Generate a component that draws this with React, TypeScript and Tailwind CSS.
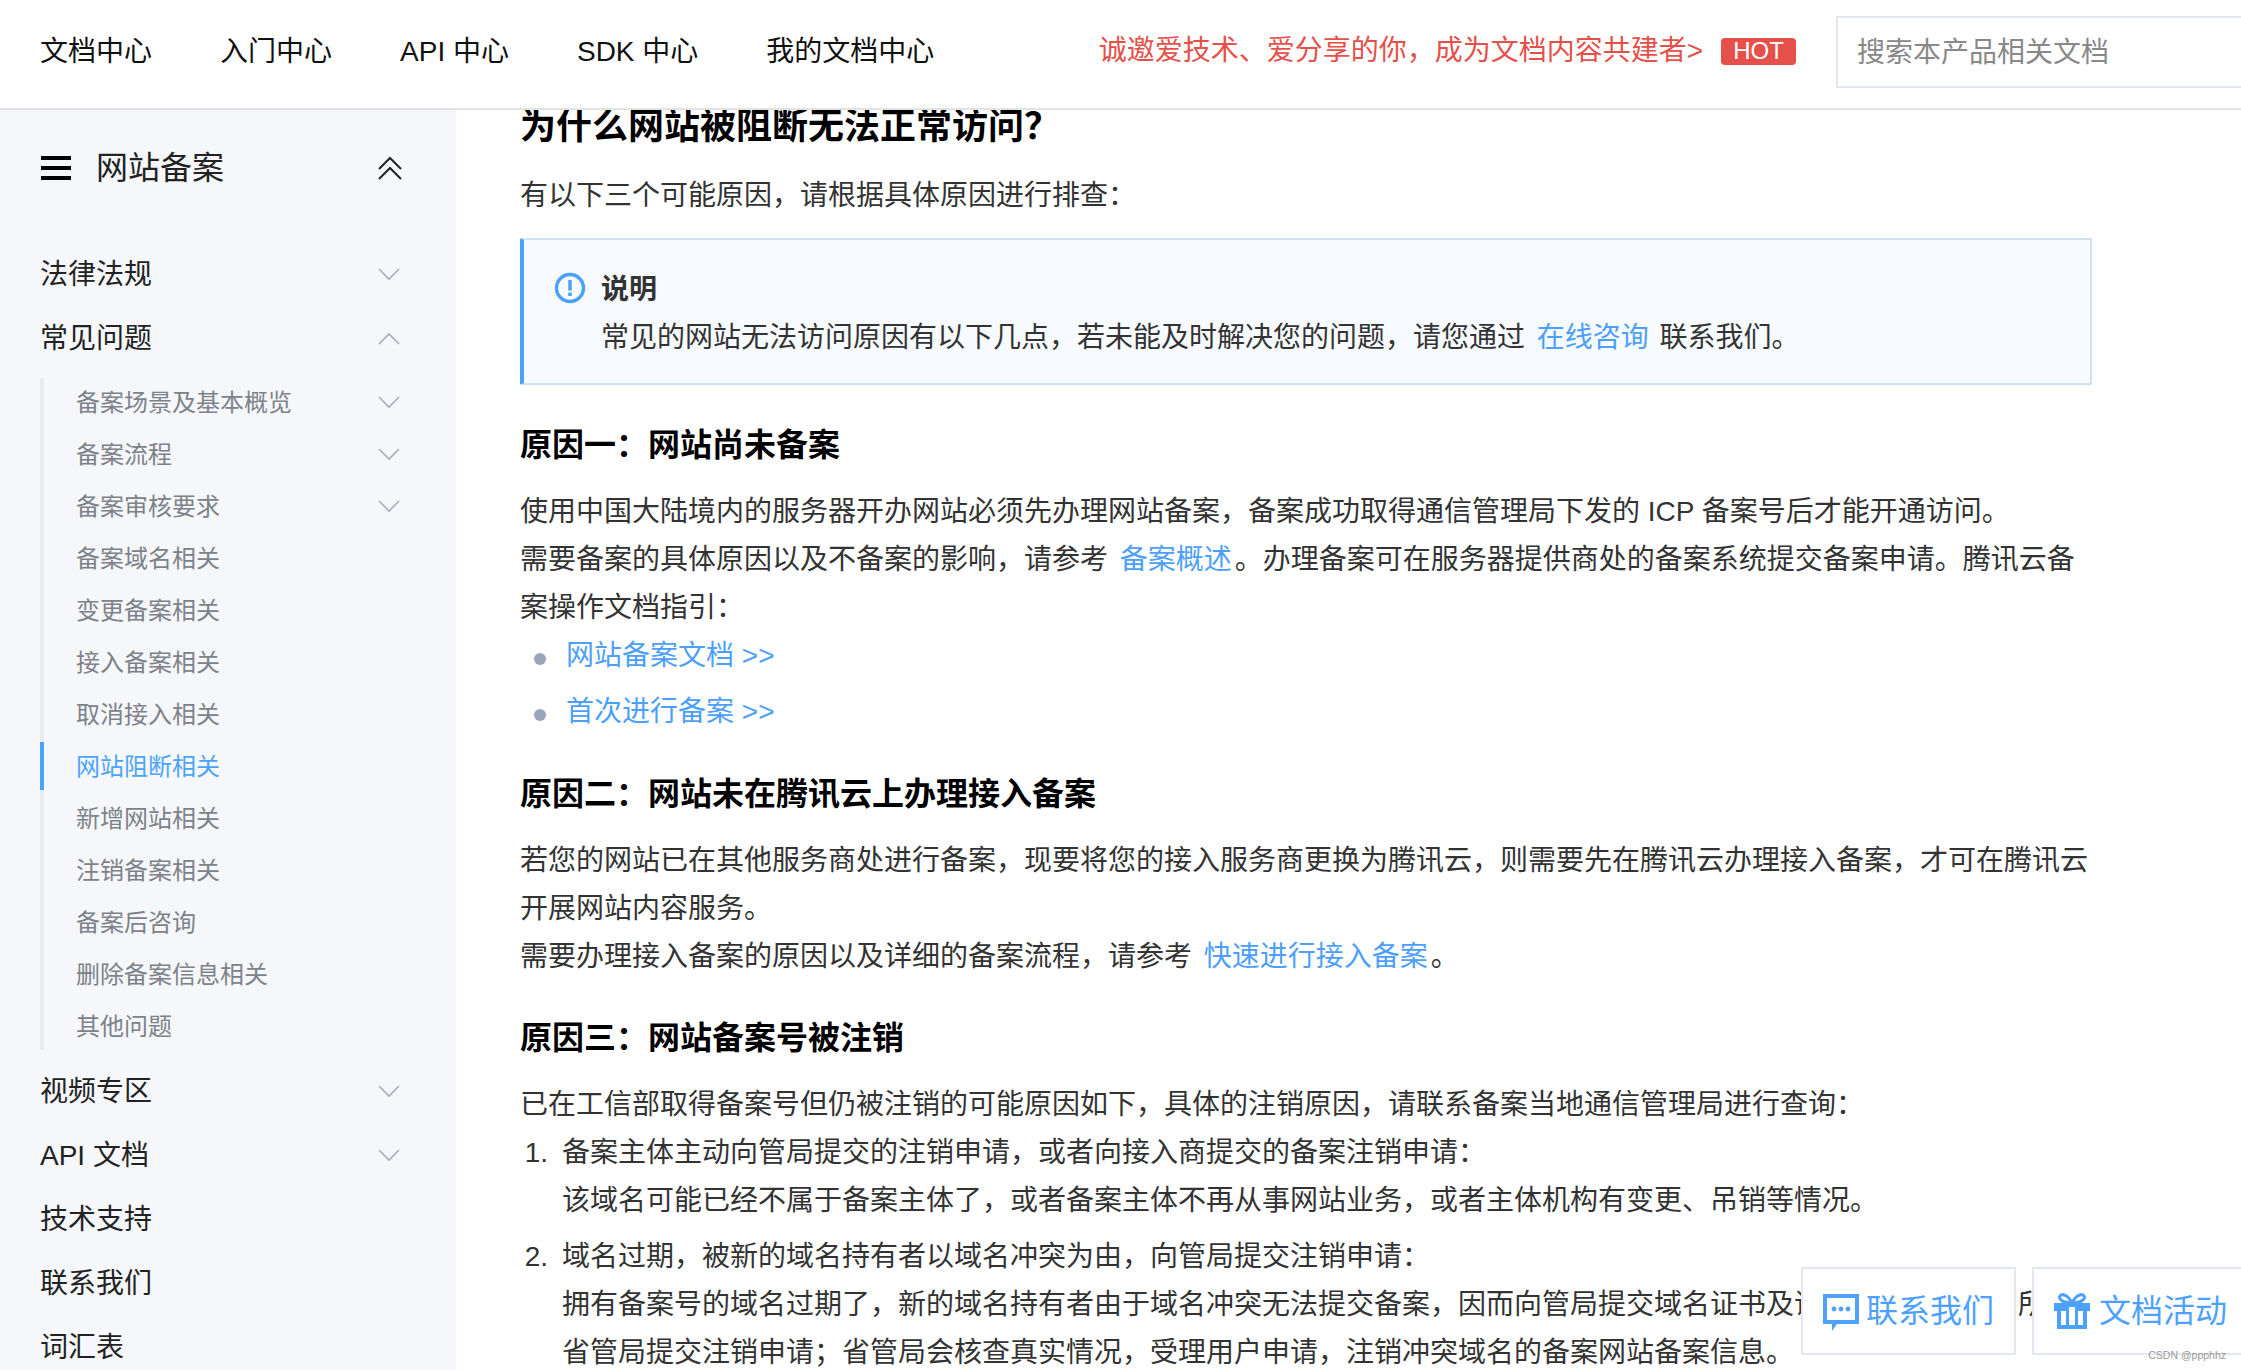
const navItems = ['文档中心', '入门中心', 'API 中心', 'SDK 中心', '我的文档中心'];

const subItems = [
  { name: '备案场景及基本概览', arrow: true },
  { name: '备案流程', arrow: true },
  { name: '备案审核要求', arrow: true },
  { name: '备案域名相关' },
  { name: '变更备案相关' },
  { name: '接入备案相关' },
  { name: '取消接入相关' },
  { name: '网站阻断相关', active: true },
  { name: '新增网站相关' },
  { name: '注销备案相关' },
  { name: '备案后咨询' },
  { name: '删除备案信息相关' },
  { name: '其他问题' },
];

const Chevron = ({ up = false }: { up?: boolean }) => (
  <svg width="22" height="13" viewBox="0 0 22 13" fill="none" stroke="#a8aeb8" strokeWidth="1.6">
    <polyline points={up ? '1,12 11,2 21,12' : '1,1 11,11 21,1'} />
  </svg>
);

const TopItem = ({ name, arrow, up }: { name: string; arrow?: boolean; up?: boolean }) => (
  <div className="flex h-[64px] items-center justify-between pl-[40px] pr-[56px] pt-[3px] text-[28px] text-[#222]">
    <span>{name}</span>
    {arrow && <Chevron up={up} />}
  </div>
);

// inline links have a little more room around them than a plain space
const A = ({ children }: { children: React.ReactNode }) => <a className="ml-[4px] mr-[3px] text-[#4c9ffa]">{children}</a>;

const H3 = ({ children, className }: { children: React.ReactNode; className: string }) => (
  <h3 className={`text-[32px] leading-[48px] font-bold text-black ${className}`}>{children}</h3>
);

const App = () => {
  return (
    <div className="relative flex h-[1370px] w-[2241px] flex-col overflow-hidden bg-white font-['Liberation_Sans','Noto_Sans_CJK_SC',sans-serif]">
      <header className="flex h-[110px] shrink-0 items-center justify-between border-b-2 border-[#e3e3e3] bg-white pb-[6px] pl-[40px] text-[28px]">
        <nav className="mt-[2px] flex gap-[68px] text-[#111]">
          {navItems.map((n) => (
            <span key={n}>{n}</span>
          ))}
        </nav>
        <div className="flex items-center">
          <span className="text-[#e5504a]">诚邀爱技术、爱分享的你，成为文档内容共建者&gt;</span>
          <span className="ml-[18px] flex h-[27px] w-[75px] items-center justify-center rounded-[4px] bg-[#e5504a] text-[24px] text-white">HOT</span>
          <div className="ml-[40px] mt-[2px] flex h-[72px] w-[405px] items-center border-2 border-r-0 border-[#e4e8ee] pl-[19px] pt-[2px] text-[#888]">搜索本产品相关文档</div>
        </div>
      </header>

      <div className="flex min-h-0 flex-1">
        <aside className="w-[456px] shrink-0 overflow-hidden bg-[#f5f7fb] pt-[26px]">
          <div className="mb-[41px] flex h-[64px] items-center pl-[41px] pr-[54px] text-[32px] text-[#222]">
            <div className="flex h-[24px] w-[30px] flex-col justify-between">
              <div className="h-[4px] bg-black" />
              <div className="h-[4px] bg-black" />
              <div className="h-[4px] bg-black" />
            </div>
            <span className="ml-[25px] flex-1">网站备案</span>
            <svg width="24" height="24" viewBox="0 0 24 24" fill="none" stroke="#222" strokeWidth="2">
              <polyline points="1,13 12,2 23,13" />
              <polyline points="1,23 12,12 23,23" />
            </svg>
          </div>
          <TopItem name="法律法规" arrow />
          <TopItem name="常见问题" arrow up />
          <ul className="ml-[40px] mt-[9px] flex flex-col gap-[4px] border-l-4 border-[#e8ebf0]">
            {subItems.map((s) => (
              <li
                key={s.name}
                className={`-ml-[4px] flex h-[48px] items-center justify-between border-l-4 pl-[32px] pr-[56px] pt-[1px] text-[24px] ${
                  s.active ? 'border-[#4ba4fc] text-[#4ba4fc]' : 'border-transparent text-[#7d8288]'
                }`}
              >
                <span>{s.name}</span>
                {s.arrow && <Chevron />}
              </li>
            ))}
          </ul>
          <div className="mt-[8px]">
            <TopItem name="视频专区" arrow />
            <TopItem name="API 文档" arrow />
            <TopItem name="技术支持" />
            <TopItem name="联系我们" />
            <TopItem name="词汇表" />
          </div>
        </aside>

        <main className="min-w-0 flex-1 overflow-hidden pl-[64px] pr-[149px] text-[28px] leading-[48px] text-[#333]">
          <h2 className="-mt-[7px] text-[36px] leading-[48px] font-bold text-black">为什么网站被阻断无法正常访问？</h2>
          <p className="mt-[21px]">有以下三个可能原因，请根据具体原因进行排查：</p>

          <div className="mt-[18px] flex h-[147px] rounded-[2px] border-2 border-l-4 border-[#cfe2f0] border-l-[#4ba1f8] bg-[#f7fbff] pl-[30px] pt-[26px]">
            <svg width="32" height="32" viewBox="0 0 32 32" className="mt-[6px] shrink-0">
              <circle cx="16" cy="16" r="13.5" fill="none" stroke="#4ba1f8" strokeWidth="3.5" />
              <rect x="14.25" y="8" width="3.5" height="10.5" fill="#4ba1f8" />
              <rect x="14.25" y="20.5" width="3.5" height="3.5" fill="#4ba1f8" />
            </svg>
            <div className="ml-[15px]">
              <div className="font-bold">说明</div>
              <div>
                常见的网站无法访问原因有以下几点，若未能及时解决您的问题，请您通过 <A>在线咨询</A> 联系我们。
              </div>
            </div>
          </div>

          <H3 className="mt-[36px]">原因一：网站尚未备案</H3>
          <p className="mt-[19px]">使用中国大陆境内的服务器开办网站必须先办理网站备案，备案成功取得通信管理局下发的 ICP 备案号后才能开通访问。</p>
          <p>
            需要备案的具体原因以及不备案的影响，请参考 <A>备案概述</A>。办理备案可在服务器提供商处的备案系统提交备案申请。腾讯云备案操作文档指引：
          </p>
          <ul>
            <li className="flex items-center">
              <span className="ml-[14px] mr-[16px] mt-[6px] size-[12px] rounded-full bg-[#9aa5b8]" />
              <A>网站备案文档 &gt;&gt;</A>
            </li>
            <li className="mt-[8px] flex items-center">
              <span className="ml-[14px] mr-[16px] mt-[6px] size-[12px] rounded-full bg-[#9aa5b8]" />
              <A>首次进行备案 &gt;&gt;</A>
            </li>
          </ul>

          <H3 className="mt-[34px]">原因二：网站未在腾讯云上办理接入备案</H3>
          <p className="mt-[19px]">若您的网站已在其他服务商处进行备案，现要将您的接入服务商更换为腾讯云，则需要先在腾讯云办理接入备案，才可在腾讯云开展网站内容服务。</p>
          <p>
            需要办理接入备案的原因以及详细的备案流程，请参考 <A>快速进行接入备案</A>。
          </p>

          <H3 className="mt-[33px]">原因三：网站备案号被注销</H3>
          <p className="mt-[19px]">已在工信部取得备案号但仍被注销的可能原因如下，具体的注销原因，请联系备案当地通信管理局进行查询：</p>
          <ol>
            <li className="flex">
              <span className="w-[28px] shrink-0 text-right">1.</span>
              <div className="ml-[14px]">
                备案主体主动向管局提交的注销申请，或者向接入商提交的备案注销申请：
                <br />
                该域名可能已经不属于备案主体了，或者备案主体不再从事网站业务，或者主体机构有变更、吊销等情况。
              </div>
            </li>
            <li className="mt-[8px] flex">
              <span className="w-[28px] shrink-0 text-right">2.</span>
              <div className="ml-[14px]">
                域名过期，被新的域名持有者以域名冲突为由，向管局提交注销申请：
                <br />
                拥有备案号的域名过期了，新的域名持有者由于域名冲突无法提交备案，因而向管局提交域名证书及证明材料，向域名所属省管局提交注销申请；省管局会核查真实情况，受理用户申请，注销冲突域名的备案网站备案信息。
              </div>
            </li>
          </ol>
        </main>
      </div>

      {/* floating buttons */}
      <div className="absolute bottom-[15px] right-0 flex gap-[16px] text-[32px] leading-none text-[#4da1ff]">
        <div className="flex h-[88px] w-[215px] items-center border-2 border-[#e1e8f2] bg-white pl-[20px]">
          <svg width="36" height="38" viewBox="0 0 36 38" className="mt-[4px] shrink-0">
            <path fillRule="evenodd" d="M0 0H36V30H14L9 37V30H0ZM4 4V26H32V4Z" fill="#4da1ff" />
            <circle cx="11" cy="15" r="2.4" fill="#4da1ff" />
            <circle cx="18" cy="15" r="2.4" fill="#4da1ff" />
            <circle cx="25" cy="15" r="2.4" fill="#4da1ff" />
          </svg>
          <span className="ml-[7px]">联系我们</span>
        </div>
        <div className="flex h-[88px] w-[209px] items-center border-2 border-r-0 border-[#e1e8f2] bg-white pl-[20px]">
          <svg width="36" height="36" viewBox="0 0 36 36" className="shrink-0">
            <path d="M18 10C14 2 8 0 6 3C4 6 9 10 18 10C27 10 32 6 30 3C28 0 22 2 18 10Z" fill="none" stroke="#4da1ff" strokeWidth="3" />
            <path fillRule="evenodd" d="M0 10H36V18H33V36H3V18H0ZM15 14V32H21V14ZM7 18V32H12V18ZM24 18V32H29V18Z" fill="#4da1ff" />
          </svg>
          <span className="ml-[9px]">文档活动</span>
        </div>
      </div>
      <span className="absolute bottom-[10px] right-[15px] text-[10.5px] leading-none text-[#999]">CSDN @ppphhz</span>
    </div>
  );
};

export default App;
